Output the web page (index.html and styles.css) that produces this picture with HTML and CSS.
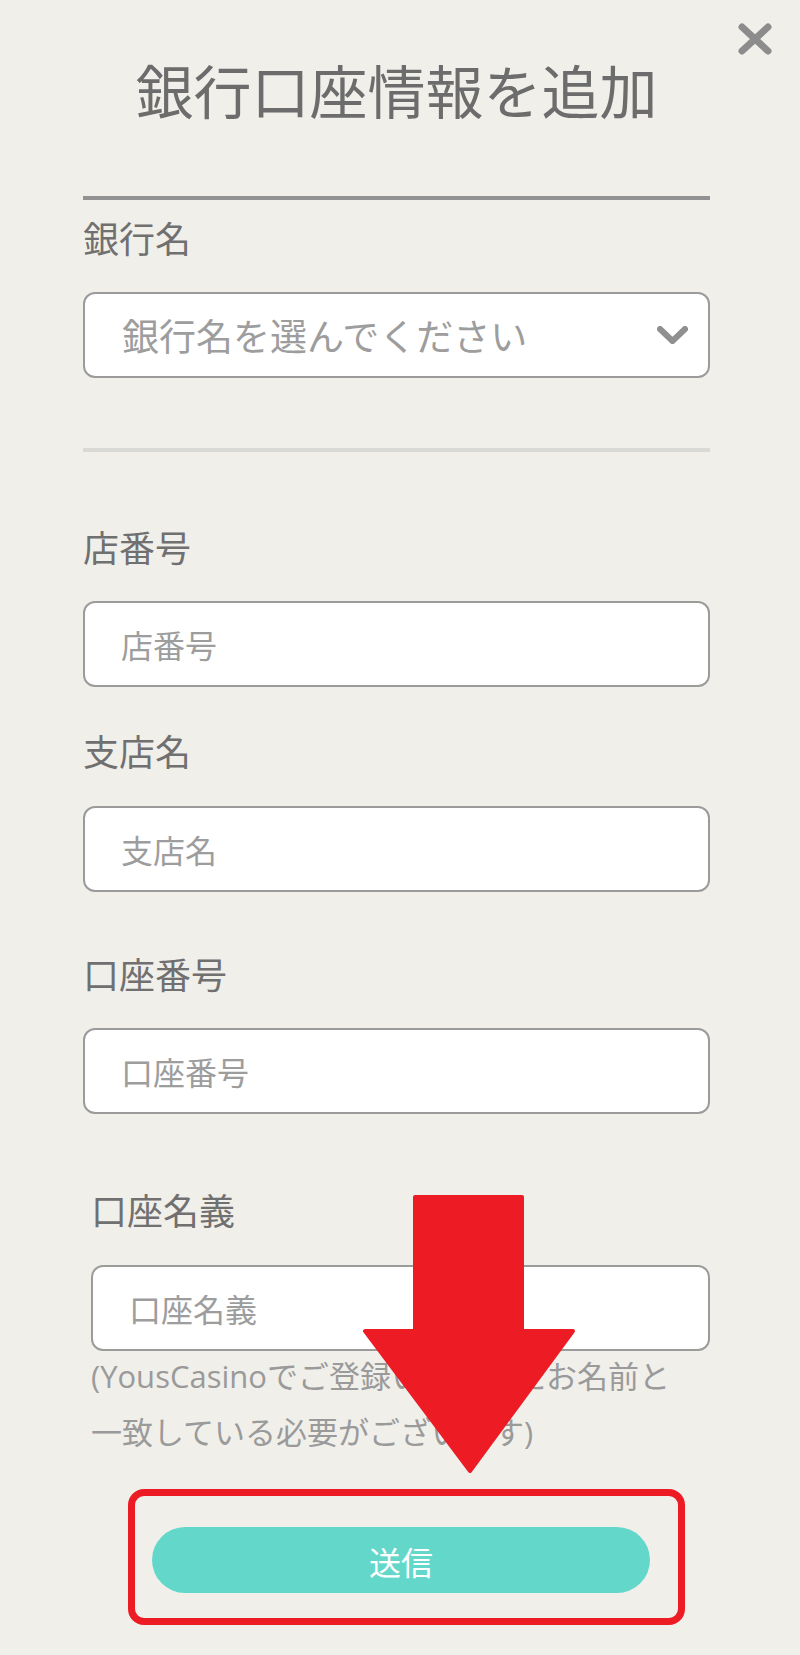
FILE: index.html
```html
<!DOCTYPE html>
<html lang="ja">
<head>
    <meta charset="UTF-8">
    <title>銀行口座情報を追加</title>
    <link rel="stylesheet" href="styles.css">
</head>
<body>

<div class="page">

    <svg class="close-btn" width="40" height="40" viewBox="0 0 40 40">
        <path d="M7 9 L33 33 M33 9 L7 33" stroke="#8c8c8c" stroke-width="7" stroke-linecap="round" fill="none"/>
    </svg>

    <h1 class="title">銀行口座情報を追加</h1>
    <div class="rule rule-dark"></div>

    <div class="field field-bank">
        <label class="field-label">銀行名</label>
        <div class="select-box">
            <span>銀行名を選んでください</span>
            <svg width="31" height="18" viewBox="0 0 31 18">
                <polyline points="3,3 15.5,15 28,3" stroke="#8f8f8f" stroke-width="6" stroke-linecap="round" stroke-linejoin="round" fill="none"/>
            </svg>
        </div>
    </div>

    <div class="rule rule-light"></div>

    <div class="field field-branch-no">
        <label class="field-label" for="branchNo">店番号</label>
        <input class="text-input" type="text" id="branchNo" placeholder="店番号">
    </div>

    <div class="field field-branch">
        <label class="field-label" for="branch">支店名</label>
        <input class="text-input" type="text" id="branch" placeholder="支店名">
    </div>

    <div class="field field-account">
        <label class="field-label" for="account">口座番号</label>
        <input class="text-input" type="text" id="account" placeholder="口座番号">
    </div>

    <div class="field field-holder">
        <label class="field-label" for="holder">口座名義</label>
        <input class="text-input" type="text" id="holder" placeholder="口座名義">
        <p class="field-note">(YousCasinoでご登録いただいたお名前と一致している必要がございます)</p>
    </div>

    <div class="submit-box">
        <button class="submit-btn">送信</button>
    </div>

    <!-- annotation arrow -->
    <svg class="arrow" width="220" height="290" viewBox="0 0 220 290">
        <polygon points="55,7 162,7 162,141 213,141 110,281 5,141 55,141" fill="#ed1c24" stroke="#ed1c24" stroke-width="4" stroke-linejoin="round"/>
    </svg>
</div>

</body>
</html>
```

FILE: styles.css
```css
* {
    box-sizing: border-box;
}

body {
    margin: 0;
    background-color: #f0efea;
    font-family: "Noto Sans CJK JP", "Noto Sans", sans-serif;
}

.page {
    position: relative;
    width: 800px;
    min-height: 1655px;
    padding: 55px 90px 0 83px;
}

.close-btn {
    position: absolute;
    top: 18px;
    right: 25px;
}

.title {
    margin: 0 0 71px;
    font-size: 58px;
    font-weight: 400;
    line-height: 1.2;
    text-align: center;
    color: #6c6c6c;
}

.rule {
    height: 4px;
}

.rule-dark {
    background-color: #929292;
}

.rule-light {
    margin-top: 70px;
    background-color: #d9d9d6;
}

.field-label {
    display: block;
    margin-bottom: 30px;
    font-size: 36px;
    line-height: 1.4;
    color: #707070;
}

.field-bank {
    margin-top: 12px;
}

.field-branch-no {
    margin-top: 69px;
}

.field-branch {
    margin-top: 38px;
}

.field-account {
    margin-top: 56px;
}

.field-holder {
    margin-top: 70px;
    margin-left: 8px;
}

.select-box {
    display: flex;
    align-items: center;
    justify-content: space-between;
    height: 86px;
    padding: 0 20px 0 37px;
    background: #fff;
    border: 2px solid #9b9b9b;
    border-radius: 12px;
    font-size: 37px;
    color: #9d9d9d;
}

.text-input {
    display: block;
    width: 100%;
    height: 86px;
    padding: 0 36px;
    background: #fff;
    border: 2px solid #9b9b9b;
    border-radius: 12px;
    font-family: inherit;
    font-size: 32px;
    color: #666;
    outline: none;
}

.text-input::placeholder {
    color: #9d9d9d;
    opacity: 1;
}

.field-note {
    margin: -3px 0 0;
    max-width: 600px;
    font-family: "Open Sans", "Noto Sans CJK JP", sans-serif;
    font-size: 31px;
    line-height: 56px;
    color: #9a9a9a;
}

.submit-box {
    width: 557px;
    margin: 29px 0 0 45px;
    padding: 31px 28px 25px 17px;
    border: 7px solid #ed1c24;
    border-radius: 16px;
}

.submit-btn {
    display: block;
    width: 100%;
    height: 66px;
    border: none;
    border-radius: 33px;
    background-color: #63d8ca;
    font-family: inherit;
    font-size: 32px;
    line-height: 66px;
    color: #fff;
    cursor: pointer;
}

.arrow {
    position: absolute;
    left: 360px;
    top: 1190px;
}
```
